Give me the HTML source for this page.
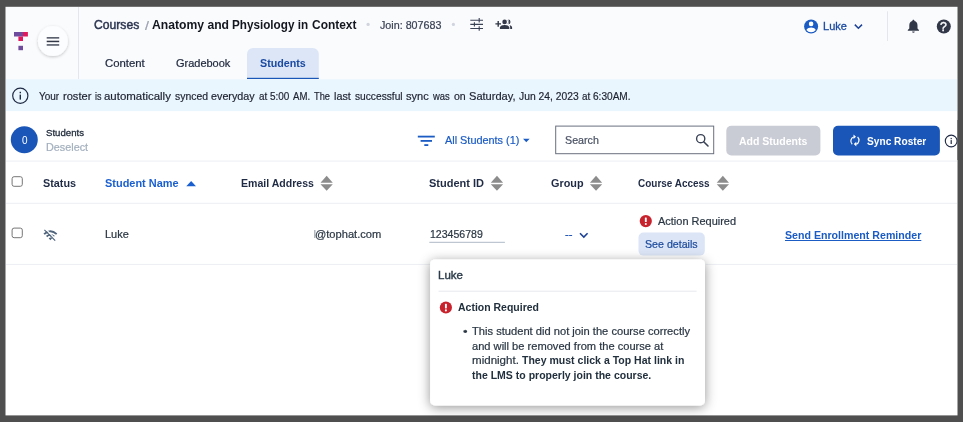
<!DOCTYPE html>
<html lang="en">
<head>
<meta charset="utf-8">
<title>Students - Anatomy and Physiology in Context</title>
<style>
html,body{margin:0;padding:0;width:963px;height:422px;overflow:hidden;background:#4f4f4f;}
body{position:relative;font-family:"Liberation Sans",sans-serif;}
#bg{position:absolute;left:0;top:0;width:963px;height:422px;display:block;}
.t{position:absolute;white-space:pre;line-height:1;transform-origin:0 50%;font-family:"Liberation Sans",sans-serif;}
</style>
</head>
<body>
<svg id="bg" width="963" height="422" viewBox="0 0 963 422">
  <defs>
    <filter id="sh1" x="-30%" y="-30%" width="160%" height="160%">
      <feDropShadow dx="0" dy="1" stdDeviation="1.8" flood-color="#000000" flood-opacity="0.22"/>
    </filter>
    <filter id="sh2" x="-15%" y="-20%" width="130%" height="150%">
      <feDropShadow dx="0" dy="2" stdDeviation="5.600" flood-color="#000000" flood-opacity="0.420"/>
    </filter>
    <g id="sort">
      <path d="M0 -0.750 L6.150 -7.600 L12.300 -0.750 Z" fill="#8c8c8c"/>
      <path d="M0 0.750 L6.150 7.400 L12.300 0.750 Z" fill="#8c8c8c"/>
    </g>
    <g id="err">
      <circle cx="0" cy="0" r="6.1" fill="#c8222d"/>
      <rect x="-0.95" y="-3.7" width="1.9" height="4.6" rx="0.6" fill="#fff"/>
      <circle cx="0" cy="2.9" r="1.05" fill="#fff"/>
    </g>
    <g id="cb">
      <rect x="-5.1" y="-4.8" width="10.2" height="9.6" rx="2" fill="#fff" stroke="#767676" stroke-width="1"/>
    </g>
  </defs>
  <rect x="0" y="0" width="963" height="422" fill="#4f4f4f"/>
  <!-- page -->
  <rect x="5.5" y="6.8" width="952" height="408.600" fill="#ffffff"/>
  <!-- header -->
  <rect x="6" y="7" width="951" height="72.2" fill="#fafbfd"/>
  <rect x="78" y="7" width="1" height="72.2" fill="#e3e6ec"/>
  <!-- logo -->
  <rect x="14" y="32" width="9" height="4.5" fill="#6f4b9e"/>
  <rect x="23" y="32" width="4.9" height="4.5" fill="#e0185c"/>
  <rect x="18.4" y="36.5" width="4.6" height="4.5" fill="#e0185c"/>
  <rect x="18.4" y="45.8" width="4.6" height="4.4" fill="#6f4b9e"/>
  <!-- hamburger -->
  <circle cx="52.9" cy="41.1" r="15" fill="#fcfdfe" filter="url(#sh1)"/>
  <rect x="46.7" y="37.1" width="12.5" height="1.5" fill="#4a5060"/>
  <rect x="46.7" y="40.7" width="12.5" height="1.5" fill="#323848"/>
  <rect x="46.7" y="44.2" width="12.5" height="1.5" fill="#4a5060"/>
  <!-- separators dots -->
  <circle cx="368.1" cy="24.4" r="1.6" fill="#cfd4de"/>
  <circle cx="453.4" cy="24.4" r="1.6" fill="#cfd4de"/>
  <!-- sliders icon -->
  <g stroke="#3a4256" stroke-width="1.1" fill="none">
    <path d="M470.3 20.2H483 M470.3 24.4H483 M470.3 28.5H483"/>
    <path d="M479.2 18V22.4 M474.4 22.2V26.6 M479.2 26.3V30.8"/>
  </g>
  <!-- group add icon -->
  <g fill="#323848">
    <path d="M495.4 23.2h2.1v-2.1h1.4v2.1h2.1v1.4h-2.1v2.1h-1.4v-2.1h-2.1z"/>
    <circle cx="504.6" cy="21.9" r="2.3"/>
    <path d="M499.9 28.9v-1.5c0-1.7 3.1-2.5 4.7-2.5s4.7 0.8 4.7 2.5v1.5z"/>
    <path d="M507.3 19.8a2.3 2.3 0 0 1 0 4.2a3.4 3.4 0 0 0 0-4.2z M508.2 19.6a2.3 2.3 0 1 1 0 4.6 a3.6 3.6 0 0 0 0-4.6z"/>
    <path d="M509.6 25.3c1.3 0.4 2.5 1.1 2.5 2.1v1.5h-1.9v-1.5c0-0.9-0.3-1.6-0.6-2.1z"/>
  </g>
  <!-- avatar -->
  <circle cx="811.1" cy="26.5" r="7" fill="#1a5bc4"/>
  <circle cx="811.1" cy="23.9" r="2.3" fill="#fff"/>
  <path d="M806.4 29.9c1-1.6 2.9-2.3 4.7-2.3s3.7 0.7 4.7 2.3a5.8 5.8 0 0 1-9.4 0z" fill="#fff"/>
  <!-- chevron -->
  <path d="M854.8 24.6L858.4 28.2L862 24.6" stroke="#1d4296" stroke-width="1.5" fill="none"/>
  <rect x="887" y="11.3" width="1" height="29.7" fill="#e3e6ec"/>
  <!-- bell -->
  <path d="M913.4 19.7c0.6 0 1 0.4 1 1v0.4c2 0.5 3.1 2.2 3.1 4.3v3.2l1.5 1.5v0.7h-11.2v-0.7l1.5-1.5v-3.2c0-2.100 1.100-3.800 3.100-4.300v-0.400c0-0.600 0.400-1 1-1z" fill="#323848"/>
  <path d="M912.1 31.5h2.600a1.300 1.300 0 0 1-2.600 0z" fill="#323848"/>
  <!-- help -->
  <circle cx="943.8" cy="26.5" r="7" fill="#323848"/>
  <!-- active tab -->
  <path d="M247 78.800V53.900a6 6 0 0 1 6-6h59.800a6 6 0 0 1 6 6V78.800z" fill="#dde6f6"/>
  <rect x="247" y="77.8" width="71.800" height="1.200" fill="#1a56b8"/>
  <!-- info bar -->
  <rect x="6" y="79.200" width="951" height="31.900" fill="#eaf6fe"/>
  <circle cx="20.300" cy="95.800" r="7.600" fill="none" stroke="#1f2a44" stroke-width="1.200"/>
  <rect x="19.600" y="94.600" width="1.400" height="5" fill="#1f2a44"/>
  <rect x="19.600" y="91.800" width="1.400" height="1.500" fill="#1f2a44"/>
  <!-- toolbar -->
  <circle cx="24.300" cy="139.800" r="13.500" fill="#1a56b8"/>
  <g fill="#1a5bc4">
    <rect x="417.800" y="135.700" width="17" height="1.800"/>
    <rect x="420.600" y="140" width="11.400" height="1.800"/>
    <rect x="424.300" y="144.200" width="4" height="1.800"/>
  </g>
  <path d="M523 138.800h6.600l-3.300 3.400z" fill="#1a5bc4"/>
  <rect x="555.700" y="126.100" width="158" height="27.600" fill="#fff" stroke="#69707e" stroke-width="1"/>
  <circle cx="700.700" cy="138.700" r="4.100" fill="none" stroke="#3a4256" stroke-width="1.400"/>
  <path d="M703.700 141.800L708 146" stroke="#3a4256" stroke-width="1.600" stroke-linecap="round"/>
  <rect x="726.300" y="125.800" width="94.100" height="29.700" rx="5" fill="#c9ccd4"/>
  <rect x="833" y="125.800" width="106.900" height="29.700" rx="5" fill="#1a56b8"/>
  <!-- sync icon -->
  <g fill="none" stroke="#fff" stroke-width="1.200">
    <path d="M852.200 144.200a4.300 4.300 0 0 1 1.500-7.200"/>
    <path d="M857.600 137a4.300 4.300 0 0 1-1.500 7.200"/>
  </g>
  <path d="M853.500 134.400l2.500 2.300-2.500 2.300z M856.300 141.800l-2.500 2.300 2.500 2.300z" fill="#fff"/>
  <circle cx="951.200" cy="141" r="5.900" fill="none" stroke="#1f2a44" stroke-width="1.100"/>
  <rect x="950.600" y="140.100" width="1.200" height="3.900" fill="#1f2a44"/>
  <rect x="950.600" y="137.900" width="1.200" height="1.300" fill="#1f2a44"/>
  <rect x="957.500" y="120" width="6" height="40" fill="#4f4f4f"/>
  <!-- lines -->
  <rect x="6" y="160.600" width="951" height="1" fill="#eceef3"/>
  <rect x="6" y="202.800" width="951" height="1" fill="#eceef3"/>
  <rect x="6" y="263.900" width="951" height="1" fill="#eceef3"/>
  <!-- checkboxes -->
  <use href="#cb" x="17.200" y="181.500"/>
  <use href="#cb" x="17.200" y="232.900"/>
  <!-- sort icons -->
  <path d="M186.300 186.200L191.150 180.900L196 186.200z" fill="#1a5fd0"/>
  <use href="#sort" x="320.500" y="183.400"/>
  <use href="#sort" x="490.800" y="183.400"/>
  <use href="#sort" x="589.900" y="183.400"/>
  <use href="#sort" x="716.700" y="183.400"/>
  <!-- wifi off -->
  <g fill="none" stroke="#50647c" stroke-linecap="butt">
    <path d="M44.1 234.1Q50.4 228.500 56.700 234.100" stroke-width="1.900"/>
    <path d="M46.600 236.500Q50.400 233.200 54.200 236.500" stroke-width="1.700"/>
    <path d="M48.700 238.300Q50.400 236.900 52.100 238.300L50.400 240.200Z" fill="#50647c" stroke="none"/>
    <path d="M45.400 228.900L56.200 239.700" stroke="#ffffff" stroke-width="1.300"/>
    <path d="M44.400 229.800L55.200 240.600" stroke-width="1.200"/>
  </g>
  <!-- id underline -->
  <rect x="429.300" y="241.800" width="75.600" height="1" fill="#aebac6"/>
  <!-- group chevron -->
  <path d="M580 233.200L583.800 237L587.600 233.200" stroke="#1d4296" stroke-width="1.600" fill="none"/>
  <!-- error icons -->
  <use href="#err" x="645.800" y="221.100"/>
  <rect x="638.500" y="232.600" width="66.300" height="23" rx="5" fill="#dbe5f6"/>
  <!-- popup -->
  <rect x="430.100" y="259.400" width="274.900" height="146" rx="5" fill="#fff" filter="url(#sh2)"/>
  <rect x="438.500" y="290.700" width="258.100" height="1" fill="#e6e9ee"/>
  <use href="#err" x="445.900" y="307.500"/>
</svg>
<span class="t" style="left:940.4px;top:21px;font-size:12px;font-weight:400;color:#fafbfd;-webkit-text-stroke:0.4px #fafbfd;transform:scaleX(1.02);">?</span>
<span class="t" style="left:94.03px;top:19px;font-size:12.2px;font-weight:400;color:#2b3550;transform:scaleX(0.9984);-webkit-text-stroke:0.45px #2b3550;">Courses</span>
<span class="t" style="left:145.33px;top:19px;font-size:13.5px;font-weight:400;color:#9aa0b0;transform:scaleX(1.0496);-webkit-text-stroke:0.22px;">/</span>
<span class="t" style="left:152.06px;top:19px;font-size:12.2px;font-weight:700;color:#14171f;transform:scaleX(0.9979);">Anatomy and</span>
<span class="t" style="left:231.99px;top:19px;font-size:12.2px;font-weight:700;color:#14171f;transform:scaleX(0.9598);">Physiology in</span>
<span class="t" style="left:311.92px;top:19px;font-size:12.2px;font-weight:700;color:#14171f;transform:scaleX(0.9802);">Context</span>
<span class="t" style="left:380.09px;top:20px;font-size:11px;font-weight:400;color:#3a4256;transform:scaleX(0.9751);-webkit-text-stroke:0.22px;">Join: 807683</span>
<span class="t" style="left:822.57px;top:21px;font-size:11.0px;font-weight:400;color:#1b4aa2;transform:scaleX(1.0018);-webkit-text-stroke:0.3px #1b4aa2;">Luke</span>
<span class="t" style="left:105.45px;top:58px;font-size:11.5px;font-weight:400;color:#222b40;transform:scaleX(0.9875);-webkit-text-stroke:0.22px;">Content</span>
<span class="t" style="left:175.55px;top:58px;font-size:11.5px;font-weight:400;color:#222b40;transform:scaleX(0.9546);-webkit-text-stroke:0.22px;">Gradebook</span>
<span class="t" style="left:260.22px;top:58px;font-size:11.5px;font-weight:700;color:#1b4aa2;transform:scaleX(0.9312);">Students</span>
<span class="t" style="left:38.73px;top:91px;font-size:11.5px;font-weight:400;color:#1d2230;transform:scaleX(0.8673);-webkit-text-stroke:0.2px;">Your</span>
<span class="t" style="left:63.17px;top:91px;font-size:11.5px;font-weight:400;color:#1d2230;transform:scaleX(0.9644);-webkit-text-stroke:0.2px;">roster</span>
<span class="t" style="left:95.12px;top:91px;font-size:11.5px;font-weight:400;color:#1d2230;transform:scaleX(0.7856);-webkit-text-stroke:0.2px;">is</span>
<span class="t" style="left:104.47px;top:91px;font-size:11.5px;font-weight:400;color:#1d2230;transform:scaleX(0.9965);-webkit-text-stroke:0.2px;">automatically</span>
<span class="t" style="left:174.64px;top:91px;font-size:11.5px;font-weight:400;color:#1d2230;transform:scaleX(0.9060);-webkit-text-stroke:0.2px;">synced</span>
<span class="t" style="left:211.00px;top:91px;font-size:11.5px;font-weight:400;color:#1d2230;transform:scaleX(0.9368);-webkit-text-stroke:0.2px;">everyday</span>
<span class="t" style="left:258.53px;top:91px;font-size:11.5px;font-weight:400;color:#1d2230;transform:scaleX(0.8604);-webkit-text-stroke:0.2px;">at</span>
<span class="t" style="left:270.39px;top:91px;font-size:11.5px;font-weight:400;color:#1d2230;transform:scaleX(0.8649);-webkit-text-stroke:0.2px;">5:00</span>
<span class="t" style="left:293.28px;top:91px;font-size:11.5px;font-weight:400;color:#1d2230;transform:scaleX(0.8364);-webkit-text-stroke:0.2px;">AM.</span>
<span class="t" style="left:313.97px;top:91px;font-size:11.5px;font-weight:400;color:#1d2230;transform:scaleX(0.8056);-webkit-text-stroke:0.2px;">The</span>
<span class="t" style="left:334.19px;top:91px;font-size:11.5px;font-weight:400;color:#1d2230;transform:scaleX(0.9359);-webkit-text-stroke:0.2px;">last</span>
<span class="t" style="left:354.95px;top:91px;font-size:11.5px;font-weight:400;color:#1d2230;transform:scaleX(0.8863);-webkit-text-stroke:0.2px;">successful</span>
<span class="t" style="left:406.12px;top:91px;font-size:11.5px;font-weight:400;color:#1d2230;transform:scaleX(0.9597);-webkit-text-stroke:0.2px;">sync</span>
<span class="t" style="left:433.20px;top:91px;font-size:11.5px;font-weight:400;color:#1d2230;transform:scaleX(0.8181);-webkit-text-stroke:0.2px;">was</span>
<span class="t" style="left:453.91px;top:91px;font-size:11.5px;font-weight:400;color:#1d2230;transform:scaleX(0.9172);-webkit-text-stroke:0.2px;">on</span>
<span class="t" style="left:468.80px;top:91px;font-size:11.5px;font-weight:400;color:#1d2230;transform:scaleX(0.9616);-webkit-text-stroke:0.2px;">Saturday,</span>
<span class="t" style="left:518.88px;top:91px;font-size:11.5px;font-weight:400;color:#1d2230;transform:scaleX(0.8964);-webkit-text-stroke:0.2px;">Jun 24, 2023</span>
<span class="t" style="left:581.53px;top:91px;font-size:11.5px;font-weight:400;color:#1d2230;transform:scaleX(0.8604);-webkit-text-stroke:0.2px;">at</span>
<span class="t" style="left:593.48px;top:91px;font-size:11.5px;font-weight:400;color:#1d2230;transform:scaleX(0.8773);-webkit-text-stroke:0.2px;">6:30AM.</span>
<span class="t" style="left:21.77px;top:135px;font-size:10.5px;font-weight:400;color:#ffffff;transform:scaleX(0.9513);">0</span>
<span class="t" style="left:46.18px;top:128px;font-size:9.9px;font-weight:400;color:#1f2a3a;transform:scaleX(0.9751);-webkit-text-stroke:0.3px;">Students</span>
<span class="t" style="left:45.90px;top:142px;font-size:11.5px;font-weight:400;color:#a3b0be;transform:scaleX(0.9412);-webkit-text-stroke:0.22px;">Deselect</span>
<span class="t" style="left:444.67px;top:135px;font-size:11.5px;font-weight:400;color:#1a5bc4;transform:scaleX(0.9461);-webkit-text-stroke:0.2px #1a5bc4;">All Students (1)</span>
<span class="t" style="left:564.72px;top:135px;font-size:11.5px;font-weight:400;color:#4a5264;transform:scaleX(0.9291);-webkit-text-stroke:0.22px;">Search</span>
<span class="t" style="left:739.30px;top:136px;font-size:11.5px;font-weight:700;color:#ffffff;transform:scaleX(0.9142);">Add Students</span>
<span class="t" style="left:866.64px;top:136px;font-size:11.5px;font-weight:700;color:#ffffff;transform:scaleX(0.8832);">Sync Roster</span>
<span class="t" style="left:42.71px;top:178px;font-size:11.5px;font-weight:700;color:#1f2a44;transform:scaleX(0.9411);">Status</span>
<span class="t" style="left:104.50px;top:178px;font-size:11.5px;font-weight:700;color:#1a5fd0;transform:scaleX(0.9526);">Student Name</span>
<span class="t" style="left:240.82px;top:178px;font-size:11.5px;font-weight:700;color:#1f2a44;transform:scaleX(0.9174);">Email Address</span>
<span class="t" style="left:429.20px;top:178px;font-size:11.5px;font-weight:700;color:#1f2a44;transform:scaleX(0.9579);">Student ID</span>
<span class="t" style="left:550.75px;top:178px;font-size:11.5px;font-weight:700;color:#1f2a44;transform:scaleX(0.9437);">Group</span>
<span class="t" style="left:638.49px;top:178px;font-size:11.5px;font-weight:700;color:#1f2a44;transform:scaleX(0.8668);">Course Access</span>
<span class="t" style="left:104.59px;top:229px;font-size:11.5px;font-weight:400;color:#2b3744;transform:scaleX(0.9539);-webkit-text-stroke:0.22px;">Luke</span>
<span class="t" style="left:313.78px;top:229px;font-size:11.5px;font-weight:400;color:#7c8792;transform:scaleX(0.6643);-webkit-text-stroke:0.22px;">l</span>
<span class="t" style="left:315.48px;top:229px;font-size:11.5px;font-weight:400;color:#2b3744;transform:scaleX(0.9666);-webkit-text-stroke:0.22px;">@tophat.com</span>
<span class="t" style="left:429.53px;top:229px;font-size:11.2px;font-weight:400;color:#2b3744;transform:scaleX(0.9431);-webkit-text-stroke:0.22px;">123456789</span>
<span class="t" style="left:564.76px;top:229px;font-size:11.5px;font-weight:400;color:#1a4fb0;transform:scaleX(0.9830);-webkit-text-stroke:0.22px;">--</span>
<span class="t" style="left:658.20px;top:216px;font-size:11.5px;font-weight:400;color:#2b3744;transform:scaleX(0.9535);-webkit-text-stroke:0.22px;">Action Required</span>
<span class="t" style="left:645.12px;top:239px;font-size:11.5px;font-weight:400;color:#1c4a9c;transform:scaleX(0.9254);-webkit-text-stroke:0.22px;">See details</span>
<span class="t" style="left:784.60px;top:230px;font-size:11.5px;font-weight:700;color:#1a5bc4;transform:scaleX(0.9235);text-decoration:underline;text-decoration-thickness:1.1px;text-underline-offset:1px;">Send Enrollment Reminder</span>
<span class="t" style="left:437.90px;top:270px;font-size:11.0px;font-weight:400;color:#2b3b4a;transform:scaleX(1.0458);-webkit-text-stroke:0.4px #2b3b4a;">Luke</span>
<span class="t" style="left:457.69px;top:302px;font-size:11.3px;font-weight:700;color:#22303e;transform:scaleX(0.9282);">Action Required</span>
<span class="t" style="left:463.17px;top:326px;font-size:11.3px;font-weight:400;color:#2b3744;transform:scaleX(1.1475);-webkit-text-stroke:0.22px;">•</span>
<span class="t" style="left:472.14px;top:326px;font-size:11.3px;font-weight:400;color:#2b3744;transform:scaleX(0.9864);-webkit-text-stroke:0.22px;">This student did not join the course correctly</span>
<span class="t" style="left:471.98px;top:341px;font-size:11.3px;font-weight:400;color:#2b3744;transform:scaleX(0.9831);-webkit-text-stroke:0.22px;">and will be removed from the course at</span>
<span class="t" style="left:471.75px;top:355px;font-size:11.3px;font-weight:400;color:#2b3744;transform:scaleX(1.0233);-webkit-text-stroke:0.22px;">midnight.</span>
<span class="t" style="left:521.88px;top:355px;font-size:11.3px;font-weight:700;color:#22303e;transform:scaleX(0.9315);">They must click a Top Hat link in</span>
<span class="t" style="left:472.28px;top:370px;font-size:11.3px;font-weight:700;color:#22303e;transform:scaleX(0.9303);">the LMS to properly join the course.</span>
</body>
</html>
